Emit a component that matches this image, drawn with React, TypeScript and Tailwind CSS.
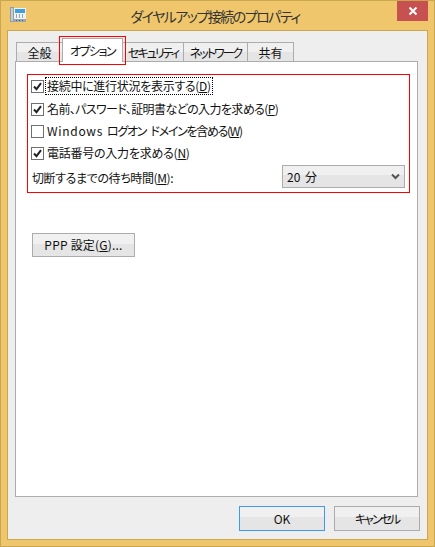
const font = { fontFamily: '"Noto Sans CJK JP", "Noto Sans", sans-serif' };

const tabBase =
  "flex items-center justify-center whitespace-nowrap border border-b-0 border-[#acacac] bg-gradient-to-b from-[#f0f0f0] from-45% to-[#e5e5e5] to-45% text-[12px] h-[20px] -mr-px self-start";

const Check = ({ checked }: { checked: boolean }) => (
  <span className="flex h-[13px] w-[13px] shrink-0 items-center justify-center border border-[#707070] bg-white">
    {checked && (
      <svg width="9" height="9" viewBox="0 0 9 9" aria-hidden="true">
        <path d="M1 4.5 L3.5 7.2 L8 1.2" fill="none" stroke="#222" strokeWidth="2" />
      </svg>
    )}
  </span>
);

const Row = ({
  checked,
  focus,
  className = "",
  textClass = "",
  children,
}: {
  checked: boolean;
  focus?: boolean;
  className?: string;
  textClass?: string;
  children: React.ReactNode;
}) => (
  <div className={`flex h-[22px] items-center gap-[2px] pl-[3px] ${className}`}>
    <Check checked={checked} />
    <span
      className={`whitespace-nowrap px-px text-[12px] leading-[16px] ${textClass} ${
        focus ? "outline-1 outline-dotted outline-black" : ""
      }`}
    >
      {children}
    </span>
  </div>
);

const Btn = ({
  children,
  className,
}: {
  children: React.ReactNode;
  className: string;
}) => (
  <button
    className={`flex items-center justify-center border bg-gradient-to-b from-[#f0f0f0] from-45% to-[#e5e5e5] to-45% text-[12px] text-[#111] ${className}`}
  >
    {children}
  </button>
);

const PhoneIcon = () => (
  <svg width="16" height="15" viewBox="0 0 16 15" aria-hidden="true">
    <rect x="0" y="0" width="4" height="15" fill="#8f9ea4" />
    <rect x="1" y="1" width="2" height="13" fill="#c3ced2" />
    <rect x="4" y="1" width="12" height="14" fill="#eef2f3" />
    <rect x="5" y="2" width="10" height="4" fill="#3f9fd8" />
    <rect x="4" y="12" width="12" height="3" fill="#9aa8ad" />
    <path d="M6 8h1M9 8h1M12 8h1M6 10h1M9 10h1M12 10h1M6 13.5h1M9 13.5h1M12 13.5h1" stroke="#3f5a63" />
  </svg>
);

export default function App() {
  return (
    <div
      className="relative flex h-[547px] w-[435px] flex-col overflow-hidden border border-[#c9a650] bg-[#efc66b] text-[#111] [font-feature-settings:'palt']"
      style={font}
    >
      {/* title bar */}
      <div className="flex h-[29px] shrink-0 items-start">
        <div className="ml-[9px] mt-[6px]">
          <PhoneIcon />
        </div>
        <div className="flex-1 pl-[7px] pt-[4px] text-center text-[14px] leading-[22px] tracking-[-1.5px] text-[#333]">
          ダイヤルアップ接続のプロパティ
        </div>
        <div className="mr-[6px] flex h-[20px] w-[31px] items-center justify-center bg-[#c75050]">
          <svg width="10" height="10" viewBox="0 0 10 10" aria-hidden="true">
            <path d="M1.5 1.5 L8.5 8.5 M8.5 1.5 L1.5 8.5" stroke="#fff" strokeWidth="2" />
          </svg>
        </div>
      </div>

      {/* client area */}
      <div className="mx-[6px] mb-[6px] flex flex-1 flex-col border border-[#c9a650] bg-[#eeeeee] px-[7px] pt-[11px]">
        <div className="flex h-[20px] items-end pl-px">
          <div className={`${tabBase} w-[47px]`}>全般</div>
          <div className="relative z-10 -mr-px -mt-[4px] flex h-[24px] w-[61px] items-center justify-center self-start whitespace-nowrap border border-b-0 border-[#acacac] bg-white text-[12px] tracking-[-1.5px]">
            オプション
          </div>
          <div className={`${tabBase} w-[62px] tracking-[-2px]`}>セキュリティ</div>
          <div className={`${tabBase} w-[65px] tracking-[-2px]`}>ネットワーク</div>
          <div className={`${tabBase} w-[47px]`}>共有</div>
        </div>

        <div className="-mt-px flex h-[436px] w-[403px] flex-col border border-[#acacac] bg-white pl-[11px] pt-[12px]">
          <div className="h-[119px] w-[383px] border border-[#ff0000]">
            <Row checked focus textClass="tracking-[-0.3px]">
              接続中に進行状況を表示する(<u>D</u>)
            </Row>
            <Row checked className="mt-px" textClass="tracking-[-0.6px]">
              名前、パスワード、証明書などの入力を求める(<u>P</u>)
            </Row>
            <Row checked={false} textClass="tracking-[-1.3px] [word-spacing:3px]">
              <span className="mr-[4px] tracking-[0.7px]">Windows</span>
              ログオン ドメインを含める(<u>W</u>)
            </Row>
            <Row checked textClass="tracking-[-0.25px]">
              電話番号の入力を求める(<u>N</u>)
            </Row>
            <div className="flex h-[25px] items-center justify-between pl-[4px] pr-[4px]">
              <span className="pt-[3px] text-[12px] tracking-[-0.4px]">
                切断するまでの待ち時間(<u>M</u>):
              </span>
              <div className="flex h-[23px] w-[123px] items-center justify-between border border-[#acacac] bg-gradient-to-b from-[#f0f0f0] from-45% to-[#e5e5e5] to-45% pl-[4px] pr-[4px] text-[12px]">
                <span className="[word-spacing:2px]">20 分</span>
                <svg width="9" height="7" viewBox="0 0 9 7" aria-hidden="true">
                  <path d="M1 1.5 L4.5 5 L8 1.5" fill="none" stroke="#555" strokeWidth="2" />
                </svg>
              </div>
            </div>
          </div>

          <Btn className="ml-[5px] mt-[40px] h-[24px] w-[103px] border-[#acacac] tracking-[0.2px]">
            PPP 設定(<u>G</u>)...
          </Btn>
        </div>

        <div className="mt-[9px] flex justify-end gap-[9px]">
          <Btn className="h-[25px] w-[86px] border-[#3c9bf0]">OK</Btn>
          <Btn className="h-[25px] w-[86px] border-[#acacac] tracking-[-2px]">キャンセル</Btn>
        </div>
      </div>

      {/* red annotation around the active tab */}
      <div className="absolute left-[58px] top-[35px] h-[29px] w-[67px] border border-[#ff0000]" />
    </div>
  );
}
